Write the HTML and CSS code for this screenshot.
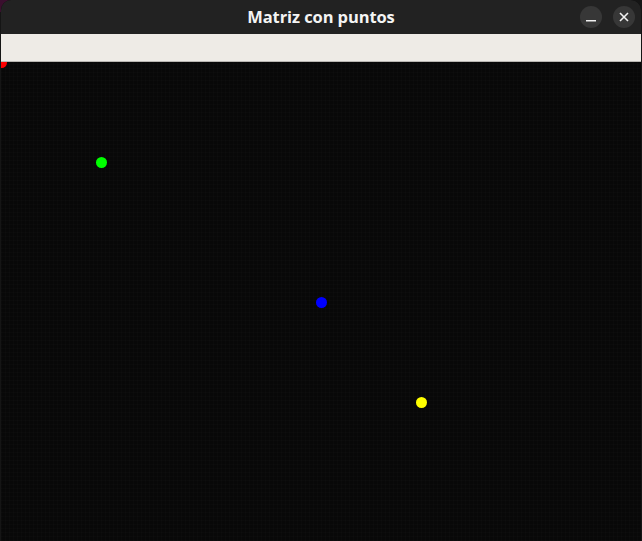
FILE: index.html
```html
<!DOCTYPE html>
<html lang="es">
<head>
<meta charset="utf-8">
<title>Matriz con puntos</title>
<link rel="stylesheet" href="styles.css">
</head>
<body>
<div class="window">
  <header class="titlebar">
    <span class="spacer"></span>
    <h1 class="title">Matriz con puntos</h1>
    <div class="controls">
      <button class="ctl" aria-label="Minimizar">
        <svg width="10" height="10" viewBox="0 0 10 10"><rect x="0" y="8" width="10" height="1.5" fill="#f0f0f0"/></svg>
      </button>
      <button class="ctl" aria-label="Cerrar">
        <svg width="10" height="10" viewBox="0 0 10 10"><path d="M1 1L9 9M9 1L1 9" stroke="#f0f0f0" stroke-width="1.6" fill="none"/></svg>
      </button>
    </div>
  </header>
  <div class="toolbar"></div>
  <main class="canvas">
    <span class="dot red" style="left:0px;top:0px"></span>
    <span class="dot green" style="left:100px;top:100px"></span>
    <span class="dot blue" style="left:320px;top:240px"></span>
    <span class="dot yellow" style="left:420px;top:340px"></span>
  </main>
</div>
</body>
</html>
```
FILE: styles.css
```css
html, body {
  margin: 0;
  padding: 0;
  height: 100%;
  overflow: hidden;
}
body {
  background: linear-gradient(#3a0f2e, #3a0f2e) top left / 12px 12px no-repeat, #151515;
}
.window {
  box-sizing: border-box;
  width: 640px;
  height: 541px;
  margin-left: 1px;
  border-radius: 10px 10px 0 0;
  overflow: hidden;
  display: flex;
  flex-direction: column;
  background: #080808;
}
.titlebar {
  height: 34px;
  flex: none;
  background: #222222;
  display: grid;
  grid-template-columns: 1fr auto 1fr;
  align-items: center;
}
.title {
  margin: 0;
  font-family: "Open Sans", "DejaVu Sans", sans-serif;
  font-weight: 700;
  font-size: 16.5px;
  color: #f4f4f4;
  letter-spacing: -0.1px;
  line-height: 34px;
  padding-bottom: 2px;
}
.controls {
  justify-self: end;
  display: flex;
  gap: 11px;
  padding-right: 6px;
  padding-bottom: 2px;
}
.ctl {
  width: 22px;
  height: 22px;
  border: none;
  border-radius: 50%;
  background: #373737;
  padding: 0;
  display: flex;
  align-items: center;
  justify-content: center;
}
.toolbar {
  height: 27px;
  flex: none;
  background: #eeebe6;
  border-bottom: 1px solid #b9b6b2;
}
.canvas {
  flex: 1;
  position: relative;
  overflow: hidden;
  background-color: #080808;
  background-image:
    repeating-linear-gradient(90deg, rgba(255,255,255,0.012) 0 1px, transparent 1px 4px),
    repeating-linear-gradient(0deg, rgba(255,255,255,0.012) 0 1px, transparent 1px 4px);
}
.dot {
  position: absolute;
  width: 11px;
  height: 11px;
  margin: -5px 0 0 -5px;
  border-radius: 50%;
}
.red { background: #ff0000; }
.green { background: #00ff00; }
.blue { background: #0000ff; }
.yellow { background: #ffff00; }
```
